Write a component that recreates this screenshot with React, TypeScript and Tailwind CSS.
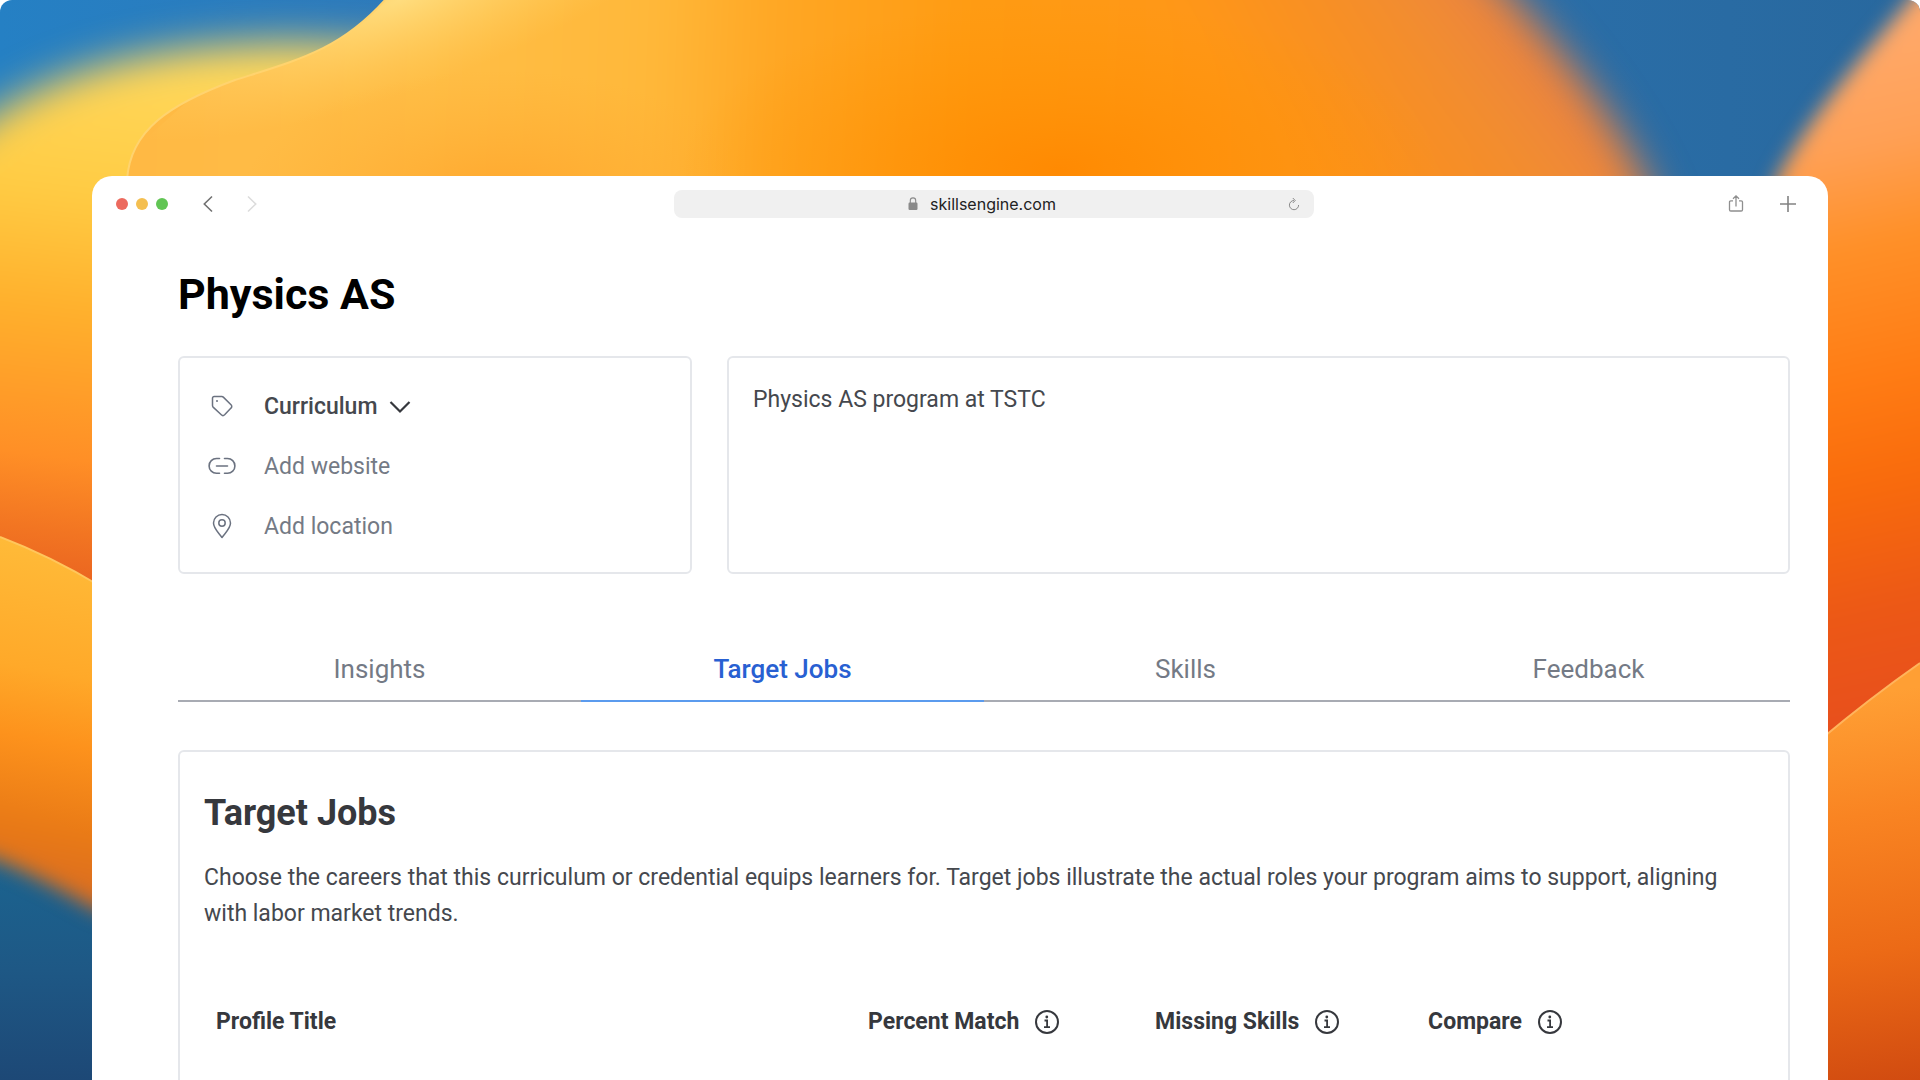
import { useState } from "react";
import type { ReactNode } from "react";

const tabs = ["Insights", "Target Jobs", "Skills", "Feedback"];

const columns = [
    { title: "Profile Title", width: "w-[41.8%]", info: false },
    { title: "Percent Match", width: "w-[18.4%]", info: true },
    { title: "Missing Skills", width: "w-[17.5%]", info: true },
    { title: "Compare", width: "w-[22.3%]", info: true },
];

function Wallpaper() {
    return (
        <svg
            className="absolute inset-0 size-full"
            viewBox="0 0 1920 1080"
            preserveAspectRatio="none"
            aria-hidden="true"
        >
            <defs>
                <linearGradient id="sky" x1="0" y1="0" x2="1920" y2="0" gradientUnits="userSpaceOnUse">
                    <stop offset="0" stopColor="#2580c4" />
                    <stop offset="0.2" stopColor="#2d7abb" />
                    <stop offset="0.8" stopColor="#2a6ea8" />
                    <stop offset="1" stopColor="#28689e" />
                </linearGradient>
                <linearGradient id="sea" x1="0" y1="860" x2="0" y2="1080" gradientUnits="userSpaceOnUse">
                    <stop offset="0" stopColor="#1b6490" />
                    <stop offset="0.5" stopColor="#1e5885" />
                    <stop offset="1" stopColor="#1d4876" />
                </linearGradient>
                <linearGradient id="leftTop" x1="0" y1="50" x2="-60" y2="570" gradientUnits="userSpaceOnUse">
                    <stop offset="0" stopColor="#ffd75a" />
                    <stop offset="0.25" stopColor="#ffcc44" />
                    <stop offset="0.48" stopColor="#ffb02c" />
                    <stop offset="0.76" stopColor="#ff8f26" />
                    <stop offset="0.9" stopColor="#f27522" />
                    <stop offset="1" stopColor="#ea6420" />
                </linearGradient>
                <linearGradient id="leftLow" x1="0" y1="540" x2="-60" y2="880" gradientUnits="userSpaceOnUse">
                    <stop offset="0" stopColor="#ffba38" />
                    <stop offset="0.35" stopColor="#ffa929" />
                    <stop offset="0.55" stopColor="#fd921c" />
                    <stop offset="0.8" stopColor="#e97a16" />
                    <stop offset="1" stopColor="#d96c22" />
                </linearGradient>
                <linearGradient id="petal" x1="130" y1="60" x2="1660" y2="120" gradientUnits="userSpaceOnUse">
                    <stop offset="0" stopColor="#ffb944" />
                    <stop offset="0.2" stopColor="#ffbe46" />
                    <stop offset="0.34" stopColor="#ffb83a" />
                    <stop offset="0.42" stopColor="#ffa724" />
                    <stop offset="0.55" stopColor="#ff9b12" />
                    <stop offset="0.7" stopColor="#ff9718" />
                    <stop offset="1" stopColor="#f88c20" />
                </linearGradient>
                <linearGradient id="petalEdge" x1="1367" y1="248" x2="1610" y2="57" gradientUnits="userSpaceOnUse">
                    <stop offset="0" stopColor="#f88c20" stopOpacity="0" />
                    <stop offset="0.6" stopColor="#f08c34" stopOpacity="0.9" />
                    <stop offset="0.8" stopColor="#ec843e" />
                    <stop offset="1" stopColor="#e0704c" />
                </linearGradient>
                <radialGradient id="petalGlow" cx="0" cy="0" r="1" gradientUnits="userSpaceOnUse" gradientTransform="translate(400 0) rotate(-20) scale(330 90)">
                    <stop offset="0" stopColor="#ffe084" stopOpacity="0.9" />
                    <stop offset="1" stopColor="#ffd060" stopOpacity="0" />
                </radialGradient>
                <radialGradient id="petalCore" cx="0" cy="0" r="1" gradientUnits="userSpaceOnUse" gradientTransform="translate(1060 170) scale(380 170)">
                    <stop offset="0" stopColor="#ff8800" stopOpacity="0.9" />
                    <stop offset="1" stopColor="#ff9400" stopOpacity="0" />
                </radialGradient>
                <radialGradient id="petalShade" cx="0" cy="0" r="1" gradientUnits="userSpaceOnUse" gradientTransform="translate(500 200) scale(260 130)">
                    <stop offset="0" stopColor="#ffa52c" stopOpacity="0.9" />
                    <stop offset="1" stopColor="#ffab30" stopOpacity="0" />
                </radialGradient>
                <linearGradient id="rightTop" x1="1790" y1="60" x2="1930" y2="700" gradientUnits="userSpaceOnUse">
                    <stop offset="0" stopColor="#ffa868" />
                    <stop offset="0.15" stopColor="#ffa055" />
                    <stop offset="0.3" stopColor="#ff9028" />
                    <stop offset="0.5" stopColor="#ff7c14" />
                    <stop offset="0.65" stopColor="#f96c0c" />
                    <stop offset="0.85" stopColor="#ec5816" />
                    <stop offset="1" stopColor="#e8501c" />
                </linearGradient>
                <linearGradient id="rightLow" x1="1830" y1="700" x2="1890" y2="1090" gradientUnits="userSpaceOnUse">
                    <stop offset="0" stopColor="#ff9f34" />
                    <stop offset="0.3" stopColor="#f98422" />
                    <stop offset="0.65" stopColor="#ec6a16" />
                    <stop offset="1" stopColor="#d04a10" />
                </linearGradient>
                <filter id="soft" x="-20%" y="-20%" width="140%" height="140%" colorInterpolationFilters="sRGB">
                    <feGaussianBlur stdDeviation="20" />
                </filter>
                <filter id="softer" x="-20%" y="-20%" width="140%" height="140%" colorInterpolationFilters="sRGB">
                    <feGaussianBlur stdDeviation="10" />
                </filter>
                <clipPath id="petalClip">
                    <path d="M385 0 C340 50 298 60 235 80 C170 104 130 130 127 180 V300 H1800 V-60 H385Z" />
                </clipPath>
            </defs>
            <rect width="1920" height="1080" fill="url(#sky)" />
            <rect y="700" width="400" height="380" fill="url(#sea)" />
            <path d="M-80 180 C0 84 120 42 300 42 L500 52 V700 H-80Z" fill="url(#leftTop)" filter="url(#soft)" />
            <g clipPath="url(#petalClip)">
                <g filter="url(#soft)">
                    <path d="M60 -150 H1365 C1515 -10 1595 80 1645 180 L1695 300 H60Z" fill="url(#petal)" />
                    <path d="M1150 -150 H1365 C1515 -10 1595 80 1645 180 L1695 300 H1150Z" fill="url(#petalEdge)" />
                </g>
                <path d="M300 0 H900 V180 H100Z" fill="url(#petalGlow)" />
                <rect x="200" y="0" width="700" height="200" fill="url(#petalShade)" />
                <rect x="600" y="0" width="900" height="200" fill="url(#petalCore)" />
            </g>
            <path d="M385 0 C340 50 298 60 235 80 C170 104 130 130 127 180" fill="none" stroke="#ffd36e" strokeWidth="2" />
            <path d="M-80 500 L0 537 Q50 556 100 586 L200 640 V950 L92 908 Q45 880 0 861 L-80 835Z" fill="url(#leftLow)" filter="url(#softer)" />
            <path d="M0 537 Q50 556 100 586 V840 L0 800Z" fill="url(#leftLow)" />
            <path d="M-10 400 H110 V590 L100 586 Q50 556 0 537 H-10Z" fill="url(#leftTop)" />
            <path d="M0 537 Q50 556 100 586" fill="none" stroke="#ffc65c" strokeWidth="2" />
            <path d="M1965 -70 C1890 30 1825 90 1776 180 L1740 300 V900 H2000 V-70Z" fill="url(#rightTop)" filter="url(#softer)" />
            <path d="M1820 740 Q1870 698 1920 663 V1080 H1820Z" fill="url(#rightLow)" />
            <path d="M1820 740 Q1870 698 1920 663" fill="none" stroke="#ffb45c" strokeWidth="2" />
        </svg>
    );
}

function LockIcon() {
    return (
        <svg width="10" height="14" viewBox="0 0 10 14" fill="none" aria-hidden="true">
            <rect x="0.5" y="5.5" width="9" height="7.5" rx="1.2" fill="#8a8a8a" />
            <path d="M2.3 6V3.6a2.7 2.7 0 0 1 5.4 0V6" stroke="#8a8a8a" strokeWidth="1.1" />
        </svg>
    );
}

function InfoIcon() {
    return (
        <svg width="24" height="24" viewBox="0 0 24 24" fill="none" stroke="#36383d" strokeWidth="2" aria-hidden="true">
            <circle cx="12" cy="12" r="11" />
            <circle cx="11.8" cy="7" r="1.4" fill="#36383d" stroke="none" />
            <path d="M9.5 10.5h2.6v6.3M9 17.2h6" strokeWidth="1.8" />
        </svg>
    );
}

function TagIcon() {
    return (
        <svg width="28" height="28" viewBox="0 0 28 28" fill="none" stroke="#6b7280" strokeWidth="1.5" strokeLinejoin="round" aria-hidden="true">
            <path d="M4.5 5.2c0-1 .7-1.7 1.7-1.7h7.6c.6 0 1.1.2 1.5.6l7.7 7.7c1 1 1 2.3 0 3.3l-6.4 6.7c-1 1-2.3 1-3.3 0L5.1 14.1c-.4-.4-.6-.9-.6-1.5Z" />
            <circle cx="9" cy="8" r="1" fill="#6b7280" stroke="none" />
        </svg>
    );
}

function LinkIcon() {
    return (
        <svg width="28" height="28" viewBox="0 0 28 28" fill="none" stroke="#6b7280" strokeWidth="1.6" strokeLinecap="round" aria-hidden="true">
            <path d="M11.5 5.5H8.5a7.4 7.4 0 0 0 0 14.8h3M16.5 5.5h3a7.4 7.4 0 0 1 0 14.8h-3M8.5 13h11" />
        </svg>
    );
}

function PinIcon() {
    return (
        <svg width="28" height="28" viewBox="0 0 28 28" fill="none" stroke="#6b7280" strokeWidth="1.5" strokeLinejoin="round" aria-hidden="true">
            <path d="M14 24.5C11 20 5.5 15.5 5.500 10a8.500 8.500 0 0 1 17 0c0 5.500-5.500 10-8.500 14.500Z" />
            <circle cx="14" cy="10" r="3.2" />
        </svg>
    );
}

function BrowserBar() {
    return (
        <header className="grid h-14 grid-cols-[1fr_640px_1fr] items-start pl-6 pr-8 pt-[14px]">
            <div className="flex h-7 items-center">
                <div className="flex gap-2">
                    <span className="size-3 rounded-full bg-[#ec6a5e]" />
                    <span className="size-3 rounded-full bg-[#f4bf50]" />
                    <span className="size-3 rounded-full bg-[#61c554]" />
                </div>
                <button type="button" aria-label="Back" className="ml-[34px]">
                    <svg width="12" height="18" viewBox="0 0 12 18" fill="none" stroke="#727272" strokeWidth="1.6">
                        <path d="M10 1.5 2.3 9l7.7 7.5" />
                    </svg>
                </button>
                <button type="button" aria-label="Forward" className="ml-8">
                    <svg width="12" height="18" viewBox="0 0 12 18" fill="none" stroke="#dcdcdc" strokeWidth="1.6">
                        <path d="M2 1.5 9.7 9 2 16.5" />
                    </svg>
                </button>
            </div>
            <div className="ml-[38px] mr-[-38px] grid h-7 grid-cols-[1fr_auto_1fr] items-center rounded-lg bg-[#f0f0f0] px-3">
                <span />
                <label className="mr-6 flex items-center gap-3">
                    <LockIcon />
                    <input
                        aria-label="Address"
                        defaultValue="skillsengine.com"
                        className="field-sizing-content bg-transparent font-['Inter'] text-base leading-7 text-[#222] outline-none"
                    />
                </label>
                <button type="button" aria-label="Reload" className="ml-auto mr-[2px]">
                    <svg width="12" height="14" viewBox="0 0 12 14" fill="none" stroke="#8a8a8a" strokeWidth="1">
                        <path d="M6 3.5A4.6 4.6 0 1 0 10.6 8M4.8 1l2.4 2.5L4.8 6" />
                    </svg>
                </button>
            </div>
            <div className="flex h-7 items-center justify-end gap-9">
                <button type="button" aria-label="Share">
                    <svg width="16" height="20" viewBox="0 0 16 20" fill="none" stroke="#8f8f8f" strokeWidth="1.3">
                        <path d="M5 6.8H2.8c-.8 0-1.3.5-1.3 1.3v7.6c0 .8.5 1.3 1.3 1.3h10.4c.8 0 1.3-.5 1.3-1.3V8.1c0-.8-.5-1.3-1.3-1.3H11M8 12.5V2M5 4.8 8 1.9l3 2.9" />
                    </svg>
                </button>
                <button type="button" aria-label="New tab">
                    <svg width="16" height="16" viewBox="0 0 16 16" stroke="#828282" strokeWidth="1.6">
                        <path d="M8 0v16M0 8h16" />
                    </svg>
                </button>
            </div>
        </header>
    );
}

function DetailRow({ icon, children }: { icon: ReactNode; children: ReactNode }) {
    return (
        <label className="flex h-[60px] items-center gap-7">
            {icon}
            {children}
        </label>
    );
}

function Details() {
    return (
        <div className="mt-8 grid grid-cols-[514px_1fr] gap-[35px]">
            <div className="rounded-md border-2 border-[#e5e7eb] px-7 pt-[19px] pb-[15px] text-[23px]">
                <DetailRow icon={<TagIcon />}>
                    <span className="flex items-center gap-3">
                        <select aria-label="Type" className="field-sizing-content appearance-none bg-transparent font-medium text-[#45484e] outline-none">
                            <option>Curriculum</option>
                        </select>
                        <svg width="22" height="14" viewBox="0 0 22 14" fill="none" stroke="#36383d" strokeWidth="2.2" aria-hidden="true">
                            <path d="m1.5 2 9.5 9.5L20.5 2" />
                        </svg>
                    </span>
                </DetailRow>
                <DetailRow icon={<LinkIcon />}>
                    <input aria-label="Website" placeholder="Add website" className="min-w-0 flex-1 outline-none placeholder:text-[#747a85]" />
                </DetailRow>
                <DetailRow icon={<PinIcon />}>
                    <input aria-label="Location" placeholder="Add location" className="min-w-0 flex-1 outline-none placeholder:text-[#747a85]" />
                </DetailRow>
            </div>
            <textarea
                aria-label="Description"
                defaultValue="Physics AS program at TSTC"
                className="resize-none rounded-md border-2 border-[#e5e7eb] px-6 py-6 text-[23px] leading-9 text-[#45484e] outline-none"
            />
        </div>
    );
}

function TargetJobs() {
    return (
        <section className="mt-12 rounded-md border-2 border-[#e5e7eb] px-6 pt-[37px] pb-16 text-[#36383d]">
            <h2 className="text-4xl leading-[48px] font-bold">Target Jobs</h2>
            <p className="mt-[23px] text-[23px] leading-9 text-[#45484e]">
                Choose the careers that this curriculum or credential equips learners for. Target jobs illustrate the
                actual roles your program aims to support, aligning with labor market trends.
            </p>
            <table className="mt-[53px] w-full table-fixed text-[23px]">
                <thead>
                    <tr>
                        {columns.map((column) => (
                            <th key={column.title} scope="col" className={`px-3 py-5 text-left font-bold ${column.width}`}>
                                <span className="flex items-center gap-4 whitespace-nowrap">
                                    {column.title}
                                    {column.info && (
                                        <button type="button" aria-label={`About ${column.title}`}>
                                            <InfoIcon />
                                        </button>
                                    )}
                                </span>
                            </th>
                        ))}
                    </tr>
                </thead>
            </table>
        </section>
    );
}

export default function App() {
    const [active, setActive] = useState("Target Jobs");

    return (
        <div className="h-screen overflow-hidden bg-white">
            <div className="relative h-full overflow-hidden rounded-t-xl px-[92px] pt-[176px]">
                <Wallpaper />
                <div className="relative min-h-full rounded-t-[20px] bg-white font-['Roboto',sans-serif]">
                    <BrowserBar />
                    <main className="pr-[38px] pb-12 pl-[86px]">
                        <h1 className="pt-8 text-[43px] leading-[60px] font-bold text-black">Physics AS</h1>
                        <Details />
                        {/* Tabs */}
                        <div role="tablist" className="mt-16 grid grid-cols-4">
                            {tabs.map((tab) => (
                                <button
                                    key={tab}
                                    type="button"
                                    role="tab"
                                    aria-selected={tab === active}
                                    onClick={() => setActive(tab)}
                                    className={
                                        tab === active
                                            ? "border-b-2 border-[#5b9bee] py-[13px] text-[26px] leading-9 font-medium text-[#2860d2]"
                                            : "border-b-2 border-[#a8abb3] py-[13px] text-[26px] leading-9 text-[#747a85]"
                                    }
                                >
                                    {tab}
                                </button>
                            ))}
                        </div>
                        <TargetJobs />
                    </main>
                </div>
            </div>
        </div>
    );
}
